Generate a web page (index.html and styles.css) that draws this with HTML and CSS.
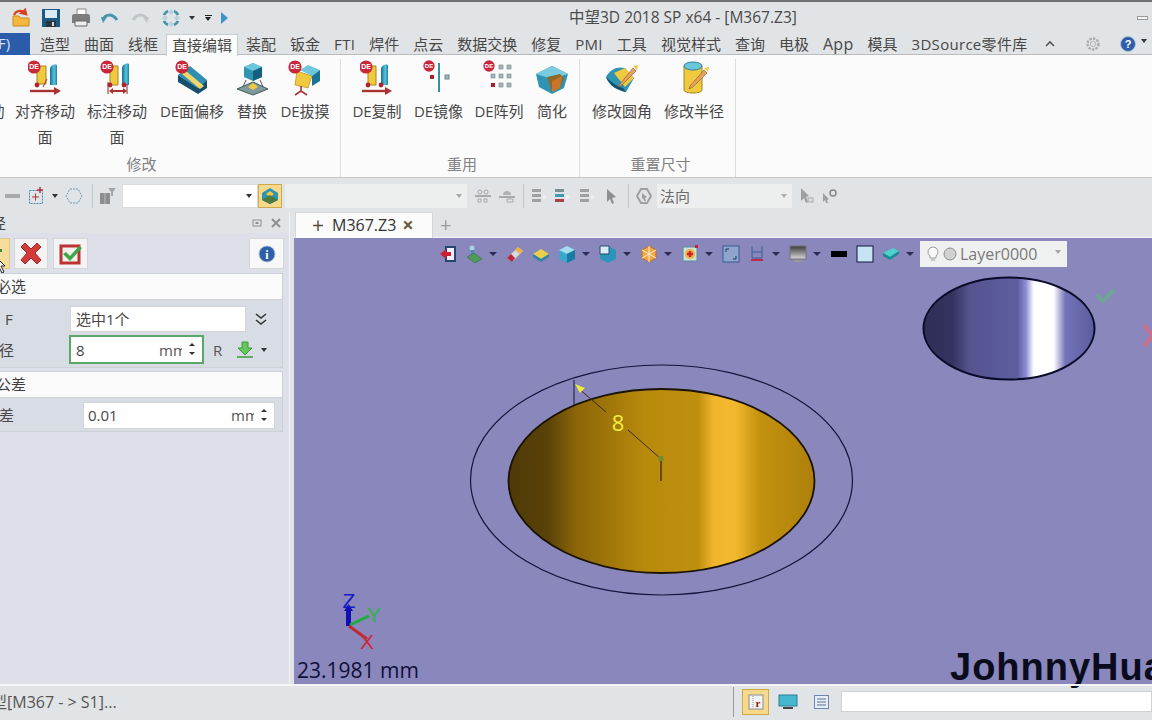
FILE: index.html
```html
<!DOCTYPE html>
<html lang="zh">
<head>
<meta charset="utf-8">
<title>中望3D 2018 SP x64 - [M367.Z3]</title>
<link rel="stylesheet" href="styles.css">
</head>
<body>
<svg class="defs" width="0" height="0">
  <defs>
    <symbol id="de" viewBox="0 0 14 14"><circle cx="7" cy="7" r="6.6" fill="#c8283a"/><text x="7" y="9.4" font-size="7" font-weight="700" fill="#fff" text-anchor="middle" font-family="Liberation Sans">DE</text></symbol>
    <linearGradient id="gold" x1="0" x2="1" y1="0" y2="0">
      <stop offset="0" stop-color="#4e3a08"/><stop offset=".13" stop-color="#5a4208"/><stop offset=".22" stop-color="#8b6508"/><stop offset=".45" stop-color="#b88a0c"/><stop offset=".62" stop-color="#c08f10"/><stop offset=".67" stop-color="#f0b52c"/><stop offset=".74" stop-color="#f2b92e"/><stop offset=".82" stop-color="#c4920f"/><stop offset="1" stop-color="#ad800c"/>
    </linearGradient>
    <linearGradient id="blueish" x1="0" x2="1" y1="0" y2="0">
      <stop offset="0" stop-color="#2f2e58"/><stop offset=".17" stop-color="#34335f"/><stop offset=".27" stop-color="#55548f"/><stop offset=".55" stop-color="#5e5da0"/><stop offset=".6" stop-color="#8e8ed8"/><stop offset=".645" stop-color="#fff"/><stop offset=".76" stop-color="#fff"/><stop offset=".83" stop-color="#7373b8"/><stop offset="1" stop-color="#5c5b9c"/>
    </linearGradient>
    <linearGradient id="cyl" x1="0" x2="1" y1="0" y2="0"><stop offset="0" stop-color="#0f6f92"/><stop offset=".6" stop-color="#5cc4dc"/><stop offset="1" stop-color="#1b7fa4"/></linearGradient>
    <linearGradient id="screen" x1="0" x2="0" y1="0" y2="1"><stop offset="0" stop-color="#3a3a3a"/><stop offset="1" stop-color="#d8d8d8"/></linearGradient>
  </defs>
</svg>

<header class="titlebar">
  <div class="qat">
    <svg class="q20" viewBox="0 0 20 20"><path d="M2 8h6l1 2h9v8H2z" fill="#f5b73c" stroke="#c98a1e"/><path d="M3 7C5 3 9 2 13 4l-2 1 4 1-1-4-1 1" fill="none" stroke="#d8401f" stroke-width="2.4"/></svg>
    <svg class="q20" viewBox="0 0 20 20"><path d="M1 1h18v18H1z" fill="#1d5a80"/><path d="M4 2h12v8H4z" fill="#dcecf5"/><path d="M5 13h10v6H5z" fill="#2c3440"/><path d="M11 14h2v4h-2z" fill="#cfd8df"/></svg>
    <svg class="q20" viewBox="0 0 20 20"><path d="M6 1h9v6H6z" fill="#fff" stroke="#888"/><path d="M1 8c0-1 1-2 2-2h14c1 0 2 1 2 2v7H1z" fill="#7d7d7d"/><path d="M4 13h12v5H4z" fill="#eee" stroke="#666"/></svg>
    <svg class="q18" viewBox="0 0 18 18"><path d="M2 11C4 5 11 4 16 11" fill="none" stroke="#4a95ad" stroke-width="3"/><path d="M0 8l6 0-4 6z" fill="#4a95ad"/></svg>
    <svg class="q18" viewBox="0 0 18 18"><path d="M16 11C14 5 7 4 2 11" fill="none" stroke="#c2c4c4" stroke-width="3"/><path d="M18 8l-6 0 4 6z" fill="#c2c4c4"/></svg>
    <svg class="q20" viewBox="0 0 20 20"><g fill="none" stroke-width="3"><path d="M3 7A8 8 0 0 1 7 3" stroke="#4a95ad"/><path d="M13 3A8 8 0 0 1 17 7" stroke="#4a95ad"/><path d="M17 13A8 8 0 0 1 13 17" stroke="#4a95ad"/><path d="M7 17A8 8 0 0 1 3 13" stroke="#4a95ad"/></g><path d="M1 10l3-3 3 3-3 3zM13 10l3-3 3 3-3 3zM10 1l3 3-3 3-3-3zM10 13l3 3-3 3-3-3z" fill="#b9d3db"/></svg>
    <i class="caret"></i>
    <span class="menu-caret"></span>
    <svg class="blue-tri" viewBox="0 0 7 12"><path d="M0 0l7 6-7 6z" fill="#3d93c8"/></svg>
  </div>
  <div class="title">中望3D 2018 SP x64 - [M367.Z3]</div>
  <span class="minimize"></span>
</header>

<nav class="tabs">
  <span class="file">F)</span>
  <span>造型</span><span>曲面</span><span>线框</span><span class="active">直接编辑</span><span>装配</span><span>钣金</span><span class="lat">FTI</span><span>焊件</span><span>点云</span><span>数据交换</span><span>修复</span><span class="lat">PMI</span><span>工具</span><span>视觉样式</span><span>查询</span><span>电极</span><span class="lat app">App</span><span>模具</span><span class="lat">3DSource零件库</span>
  <div class="tab-tools">
    <svg class="chev" viewBox="0 0 10 8"><path d="M1 6l4-4 4 4" fill="none" stroke="#555" stroke-width="1.6"/></svg>
    <svg class="gear" viewBox="0 0 16 16"><circle cx="8" cy="8" r="5.5" fill="none" stroke="#a9acae" stroke-width="2.4" stroke-dasharray="2.4 1.2"/><circle cx="8" cy="8" r="2.6" fill="none" stroke="#b5b7b9"/></svg>
    <svg class="help" viewBox="0 0 16 16"><circle cx="8" cy="8" r="7.5" fill="#2f5fa8" stroke="#aac1de"/><text x="8" y="12" font-size="11" font-weight="700" fill="#fff" text-anchor="middle" font-family="Liberation Sans">?</text></svg>
    <i class="caret dark"></i>
  </div>
</nav>

<section class="ribbon">
  <div class="group g1">
    <div class="items">
      <div class="item w69"><div class="ric"></div><div class="lbl">推拉移动面</div></div>
      <div class="item w72">
        <svg class="ric" viewBox="0 0 34 36"><path d="M9 6h9v18H9z" fill="#f1c93e" stroke="#a3851f"/><path d="M22 9c0-4 7-6 7-3v19h-7z" fill="url(#cyl)"/><circle cx="9" cy="25" r="2.4" fill="#b5202e"/><path d="M2 31h25" stroke="#a8332f" stroke-width="2.4"/><path d="M26 27l7 4-7 4z" fill="#a8332f"/><path d="M15 27l4-8" stroke="#a8332f"/><use href="#de" x="-1" y="0" width="14" height="14"/></svg>
        <div class="lbl">对齐移动面</div></div>
      <div class="item w72">
        <svg class="ric" viewBox="0 0 34 36"><path d="M10 6h8v19h-8z" fill="#f1c93e" stroke="#a3851f"/><path d="M22 8c0-4 7-6 7-3v20h-7z" fill="url(#cyl)"/><path d="M8 22v12M27 24v10" stroke="#7c2a2a"/><circle cx="10" cy="25" r="2.4" fill="#b5202e"/><circle cx="24" cy="25" r="2.4" fill="#b5202e"/><path d="M11 31h14" stroke="#a8332f" stroke-width="2"/><path d="M9 31l4-3v6zM27 31l-4-3v6z" fill="#a8332f"/><use href="#de" x="0" y="0" width="14" height="14"/></svg>
        <div class="lbl">标注移动面</div></div>
      <div class="item w78">
        <svg class="ric" viewBox="0 0 34 36"><path d="M3 15L15 6l17 14-9 8z" fill="#2f8fb0"/><path d="M3 15v7l20 12 9-6v-8l-9 8z" fill="#14506e"/><path d="M7 14l18 15 4-3L11 11z" fill="#f1d56a"/><use href="#de" x="0" y="0" width="14" height="14"/></svg>
        <div class="lbl">DE面偏移</div></div>
      <div class="item w42">
        <svg class="ric" viewBox="0 0 34 36"><path d="M9 7l9-4 9 4v10l-9 4-9-4z" fill="#2f93b4"/><path d="M9 7l9 4 9-4-9-4z" fill="#6dc7dc"/><path d="M18 11v10l9-4V7z" fill="#14607f"/><path d="M11 20l-4 9M25 20l4 9" stroke="#555"/><path d="M2 29l16-7 15 7-15 6z" fill="#7e9a9c" stroke="#43565a"/><path d="M13 27l5-4 5 4-5 3z" fill="#f1c93e"/></svg>
        <div class="lbl">替换</div></div>
      <div class="item w64">
        <svg class="ric" viewBox="0 0 34 36"><path d="M12 10l8-5 12 5-8 6z" fill="#6dc7dc"/><path d="M24 16l8-6v11l-8 5z" fill="#1b7296"/><path d="M9 11l15 5-4 12-13-3z" fill="#f1c93e" stroke="#a3851f" stroke-width=".6"/><path d="M13 26v5M13 31l-6 4M13 31l6 4" stroke="#a8332f" stroke-width="1.6"/><use href="#de" x="0" y="0" width="14" height="14"/></svg>
        <div class="lbl">DE拔摸</div></div>
    </div>
    <div class="glabel shifted">修改</div>
  </div>
  <div class="group g2">
    <div class="items">
      <div class="item w64">
        <svg class="ric" viewBox="0 0 34 36"><path d="M8 6h8v19H8z" fill="#f1c93e" stroke="#a3851f"/><path d="M21 9c0-4 7-6 7-3v19h-7z" fill="url(#cyl)"/><circle cx="8" cy="25" r="2.4" fill="#b5202e"/><circle cx="21" cy="25" r="2.4" fill="#b5202e"/><path d="M2 31h24" stroke="#a8332f" stroke-width="2.4"/><path d="M25 27l7 4-7 4z" fill="#a8332f"/><use href="#de" x="-1" y="0" width="14" height="14"/></svg>
        <div class="lbl">DE复制</div></div>
      <div class="item w59">
        <svg class="ric" viewBox="0 0 34 36"><path d="M17 3v29" stroke="#3a8fa8" stroke-width="2"/><rect x="8" y="15" width="4" height="4" fill="#a8202e"/><rect x="23" y="15" width="4" height="4" fill="#a7b7bb" stroke="#6f8489"/><use href="#de" x="1" y="0" width="12" height="12"/></svg>
        <div class="lbl">DE镜像</div></div>
      <div class="item w62">
        <svg class="ric" viewBox="0 0 34 36"><g fill="#a7b7bb" stroke="#6f8489" stroke-width=".6"><rect x="17" y="5" width="4" height="4"/><rect x="25" y="5" width="4" height="4"/><rect x="9" y="14" width="4" height="4"/><rect x="17" y="14" width="4" height="4"/><rect x="25" y="14" width="4" height="4"/><rect x="17" y="23" width="4" height="4"/><rect x="25" y="23" width="4" height="4"/></g><rect x="9" y="23" width="4" height="4" fill="#a8202e"/><use href="#de" x="1" y="0" width="12" height="12"/></svg>
        <div class="lbl">DE阵列</div></div>
      <div class="item w44">
        <svg class="ric" viewBox="0 0 34 36"><path d="M1 14l16-8 16 8-4 14-12 6-13-7z" fill="#2f93b4"/><path d="M1 14l16-8 16 8-16 5z" fill="#79ccdf"/><path d="M12 17l13-3 4 4-4 10-8 4z" fill="#8b6a2d"/><path d="M17 21l10-5-2 12-8 4z" fill="#c9762a"/></svg>
        <div class="lbl">简化</div></div>
    </div>
    <div class="glabel">重用</div>
  </div>
  <div class="group g3">
    <div class="items">
      <div class="item w72">
        <svg class="ric" viewBox="0 0 34 36"><path d="M1 17C5 9 13 6 20 8l9 10-8 14C12 30 4 26 1 17z" fill="#2f93b4"/><path d="M1 17c4 9 11 13 20 15l-3-4C11 26 6 22 1 17z" fill="#14506e"/><path d="M9 13l11-5 9 10-9 9z" fill="#f1c93e"/><path d="M15 24L28 8l3 3-14 14-4 2z" fill="#e8a15c" stroke="#7d5a2e" stroke-width=".6"/><path d="M28 6l4 4 1-5z" fill="#f1c93e"/></svg>
        <div class="lbl">修改圆角</div></div>
      <div class="item w72">
        <svg class="ric" viewBox="0 0 34 36"><path d="M7 6h18v24c0 4-18 4-18 0z" fill="#f1c93e" stroke="#a3851f"/><ellipse cx="16" cy="6" rx="9" ry="4" fill="#6dc7dc" stroke="#2f7e97"/><path d="M13 26L27 10l3 3-14 14-4 2z" fill="#e8a15c" stroke="#7d5a2e" stroke-width=".6"/><path d="M27 8l4 4 1-5z" fill="#f1c93e"/></svg>
        <div class="lbl">修改半径</div></div>
    </div>
    <div class="glabel">重置尺寸</div>
  </div>
</section>

<section class="toolbar">
  <span class="dash"></span>
  <svg class="t18" viewBox="0 0 18 18"><rect x="1.5" y="3.5" width="13" height="13" fill="none" stroke="#4b89a8" stroke-dasharray="2 1"/><path d="M4 10h7M7.5 6.5v7" stroke="#b03040"/><path d="M12 0v6M9 3h6" stroke="#b03040" stroke-width="1.5"/></svg>
  <i class="caret tb"></i>
  <svg class="t18 hex" viewBox="0 0 18 18"><path d="M5 2h8l4 7-4 7H5L1 9z" fill="none" stroke="#6a9db3" stroke-dasharray="2 1"/></svg>
  <span class="sep"></span>
  <svg class="t18 filt" viewBox="0 0 18 18"><path d="M1 6h10v11H1z" fill="#8c8f90"/><path d="M6 6v11" stroke="#bbb"/><path d="M9 1h8l-3 4v4h-2V5z" fill="#a5a8a9"/></svg>
  <div class="combo white"><i class="caret"></i></div>
  <div class="yellow-btn">
    <svg width="18" height="18" viewBox="0 0 18 18"><path d="M1 6l8-5 8 5v7l-8 4-8-4z" fill="#2f93b4"/><path d="M5 7l4-3 4 3-4 3z" fill="#f1c93e"/><path d="M1 13l8-5 8 5-8 4z" fill="#4c7a3d"/></svg>
  </div>
  <div class="combo grey w182"><i class="caret pale"></i></div>
  <svg class="t16 ml8" viewBox="0 0 16 16"><g fill="none" stroke="#a7a9aa"><circle cx="5" cy="4" r="2"/><circle cx="11" cy="4" r="2"/><path d="M0 8h16" stroke-width="2"/><path d="M3 11h3v3H3zM9 11h3v3H9z"/></g></svg>
  <svg class="t16 ml8" viewBox="0 0 16 16"><path d="M4 7a4 4 0 0 1 8 0z" fill="#b0b2b3"/><path d="M0 9h16" stroke="#a7a9aa" stroke-width="2"/><path d="M8 11h6v3H8z" fill="none" stroke="#a7a9aa"/></svg>
  <span class="sep s2"></span>
  <svg class="t16 ml7" viewBox="0 0 16 16"><path d="M1 1h9v3H1zM1 6h9v3H1zM1 11h9v3H1z" fill="#9ea1a2"/><path d="M12 6l4 3-4 3z" fill="#eee"/></svg>
  <svg class="t16 ml7" viewBox="0 0 16 16"><path d="M1 1h9v3H1z" fill="#7e8f94"/><path d="M1 6h9v3H1z" fill="#3d9ab5"/><path d="M1 11h9v3H1z" fill="#a8404c"/><path d="M12 6l4 3-4 3z" fill="#eee"/></svg>
  <svg class="t16 ml9" viewBox="0 0 16 16"><path d="M1 1h9v3H1zM1 6h9v3H1zM1 11h9v3H1z" fill="#9ea1a2"/><path d="M12 6l4 3-4 3z" fill="#eee"/></svg>
  <svg class="t16 ml9" viewBox="0 0 16 16"><path d="M3 1l9 8-4 1 2 5-2 1-2-5-3 3z" fill="#8d9092"/></svg>
  <span class="sep s3"></span>
  <svg class="t16 ml7" viewBox="0 0 16 16"><path d="M5 1h6l4 7-4 7H5L1 8z" fill="none" stroke="#9ea1a2" stroke-width="2"/><path d="M6 5l5 4-2 1 1 3-2 0-1-3-1 1z" fill="#9ea1a2"/></svg>
  <div class="combo grey w135">法向<i class="caret pale"></i></div>
  <svg class="t16 ml7" viewBox="0 0 16 16"><path d="M2 0l8 8-3 1 2 5-2 1-2-5-3 3z" fill="#9ea1a2"/><rect x="9" y="10" width="5" height="4" fill="#ddd" stroke="#aaa"/></svg>
  <svg class="t16 ml7" viewBox="0 0 16 16"><path d="M1 5l6 6-2 1 1 3-2 0-1-3-2 2z" fill="#9ea1a2"/><circle cx="11" cy="5" r="3" fill="none" stroke="#888" stroke-width="1.5"/></svg>
</section>

<main class="main">
  <aside class="panel">
    <div class="panel-title">
      <span class="ptext">径</span>
      <svg class="pi" viewBox="0 0 10 10"><rect x="1" y="2" width="8" height="6" fill="none" stroke="#8d9092"/><rect x="3.5" y="4" width="3" height="2" fill="#8d9092"/></svg>
      <svg class="pi px" viewBox="0 0 12 10"><path d="M2 1l8 8M10 1L2 9" stroke="#8d9092" stroke-width="2"/></svg>
    </div>
    <div class="pbtns">
      <div class="pbtn ok"></div>
      <div class="pbtn red">
        <svg width="26" height="24" viewBox="0 0 26 24"><path d="M3 5l4-4 6 6 6-6 4 4-6 6 6 7-4 4-6-6-6 6-4-4 6-7z" fill="#d33a3a" stroke="#a12a2a"/></svg>
      </div>
      <div class="pbtn apply">
        <svg width="24" height="22" viewBox="0 0 24 22"><path d="M2 3h18v17H2z" fill="#f3f0ec" stroke="#b33" stroke-width="3"/><path d="M7 9l4 4 9-10 3 2-12 13-7-7z" fill="#3fa64a"/></svg>
      </div>
      <div class="pbtn info">
        <svg width="18" height="18" viewBox="0 0 18 18"><circle cx="9" cy="9" r="8" fill="#2f5fa8" stroke="#a4bcdc"/><text x="9" y="14" font-size="12" font-weight="700" fill="#fff" text-anchor="middle" font-family="Liberation Serif">i</text></svg>
      </div>
    </div>
    <div class="sec-head">必选</div>
    <div class="sec-body b1">
      <div class="row r1">
        <span class="rlabel">F</span>
        <div class="field f1">选中1个</div>
        <svg class="dbl" viewBox="0 0 14 14"><path d="M2 2l5 4 5-4M2 8l5 4 5-4" fill="none" stroke="#333" stroke-width="1.6"/></svg>
      </div>
      <div class="row r2">
        <span class="rlabel clip">径</span>
        <div class="field f2">8<span class="unit">mm</span><span class="spin"><i></i><i></i></span></div>
        <span class="rr">R</span>
        <svg class="garrow" viewBox="0 0 18 18"><path d="M6 1h6v6h4l-7 7-7-7h4z" fill="#68c45c" stroke="#3d9a3d"/><path d="M1 16h16" stroke="#3d9a3d" stroke-width="1.5"/></svg>
        <i class="caret"></i>
      </div>
    </div>
    <div class="sec-head second">公差</div>
    <div class="sec-body b2">
      <div class="row r3">
        <span class="rlabel clip">差</span>
        <div class="field f3">0.01<span class="unit">mm</span><span class="spin"><i></i><i></i></span></div>
      </div>
    </div>
    <svg class="cursor" viewBox="0 0 12 16"><path d="M1 0l9 9H6l3 6-2 1-3-6-3 3z" fill="#fff" stroke="#222"/></svg>
  </aside>

  <div class="work">
    <div class="doc-tabs">
      <div class="doc-tab"><span class="plus">+</span>M367.Z3<span class="close">×</span></div>
      <span class="newtab">+</span>
    </div>
    <div class="viewport">
      <svg class="scene" viewBox="294 238 858 446">
        <ellipse cx="661.5" cy="480" rx="191" ry="115" fill="none" stroke="#14143c" stroke-width="1.2"/>
        <ellipse cx="661.5" cy="481" rx="153" ry="92" fill="url(#gold)" stroke="#1a1204" stroke-width="1.8"/>
        <ellipse cx="1009" cy="328.5" rx="85.5" ry="51" fill="url(#blueish)" stroke="#0a0a2a" stroke-width="2"/>
        <path d="M574 380v25" stroke="#14143c"/>
        <path d="M578 388L606 412M628 430L660 458" stroke="#3a2a20"/>
        <path d="M575 384l10 4-5 5z" fill="#ecec3a"/>
        <path d="M661 459v22" stroke="#2a2210" stroke-width="1.2"/>
        <rect x="658.5" y="456" width="5" height="5" fill="#7a8a2a"/>
        <text x="618" y="431" class="dim">8</text>
        <path d="M1097 295l6 6 11-11" fill="none" stroke="#6fa596" stroke-width="4"/>
        <path d="M1144 325l8 10M1144 346l8-10" stroke="#c8708c" stroke-width="4"/>
        <path d="M348.5 626v-18" stroke="#1010b0" stroke-width="5"/>
        <g fill="none" stroke-width="3"><path d="M350 625l19-9" stroke="#1cae3c"/><path d="M349 626l18 13" stroke="#c02a38"/></g>
        <path d="M344 611l4.500-7 4.500 7z" fill="#1010b0"/>
        <text x="349" y="608" class="ax z">Z</text>
        <text x="374" y="622" class="ax y">Y</text>
        <text x="367" y="649" class="ax x">X</text>
      </svg>
      <div class="vtools">
        <svg viewBox="0 0 18 18"><path d="M7 2h9v14H7z" fill="#eef" stroke="#23476e" stroke-width="2"/><path d="M1 9l6-5v3h5v4H7v3z" fill="#d01e32"/></svg>
        <svg viewBox="0 0 18 18"><circle cx="7" cy="3" r="2.5" fill="#a5d5e4"/><path d="M6 5h3v7H6z" fill="#3d93b0"/><path d="M2 12l7-4 8 6-7 4z" fill="#4e9a5d" stroke="#356d40" stroke-width=".6"/></svg>
        <i class="dd"></i>
        <svg viewBox="0 0 18 18"><path d="M1 13L12 2l5 4L6 17z" fill="#d8d8d8" stroke="#999" stroke-width=".5"/><path d="M1 13l4-4 4 4-3 4z" fill="#b72a3c"/><path d="M12 2l5 4-3 3-5-4z" fill="#e9b24b"/></svg>
        <svg viewBox="0 0 18 18"><path d="M1 9l8-5 8 5-8 5z" fill="#e9cf48"/><path d="M1 9v3l8 5 8-5V9l-8 5z" fill="#2b85a5"/></svg>
        <svg viewBox="0 0 18 18"><path d="M1 5l8-4 8 4v9l-8 4-8-4z" fill="#3aa8cc"/><path d="M1 5l8 4 8-4-8-4z" fill="#a6dded"/><path d="M9 9v9l8-4V5z" fill="#1b7aa0"/></svg>
        <i class="dd"></i>
        <svg viewBox="0 0 18 18"><path d="M1 5l8-4 8 4v9l-8 4-8-4z" fill="#2b94bc"/><path d="M1 1h9v8H1z" fill="#dcecf5" stroke="#234f70"/></svg>
        <i class="dd"></i>
        <svg viewBox="0 0 18 18"><path d="M9 1l7 4v8l-7 4-7-4V5z" fill="#f0a64a" stroke="#c06f1d"/><path d="M2 5l14 8M16 5L2 13M9 1v16" stroke="#fff1c8"/></svg>
        <i class="dd"></i>
        <svg viewBox="0 0 18 18"><rect x="2" y="2" width="14" height="14" fill="#cfe0d8" stroke="#5b8e9e"/><circle cx="9" cy="9" r="5" fill="#eeb23e"/><path d="M6 9h6M9 6v6" stroke="#d01e32" stroke-width="2.400"/><rect x="14" y="0" width="3" height="3" fill="#d01e32"/></svg>
        <i class="dd"></i>
        <svg viewBox="0 0 18 18"><rect x="1" y="1" width="16" height="16" fill="#8fa6cc" stroke="#3b5a94"/><path d="M4 7V4h3M14 11v3h-3" stroke="#23345f" fill="none"/></svg>
        <svg viewBox="0 0 18 18"><path d="M4 1v12h10V1M4 7h10" fill="none" stroke="#3b5a94"/><path d="M3 15h12" stroke="#c02a4a" stroke-width="2"/></svg>
        <i class="dd"></i>
        <svg viewBox="0 0 18 18"><rect x="1" y="1" width="16" height="13" fill="url(#screen)" stroke="#777"/><path d="M5 15h8v2H5z" fill="#999"/></svg>
        <i class="dd"></i>
        <svg viewBox="0 0 18 18"><rect x="1" y="6" width="16" height="6" fill="#000"/></svg>
        <svg viewBox="0 0 18 18"><rect x="1" y="1" width="16" height="16" fill="#c5e3f3" stroke="#14143c"/></svg>
        <svg viewBox="0 0 18 18"><path d="M1 8l10-5 6 3-9 6z" fill="#4fd0cd"/><path d="M1 8v3l7 4 9-6V6l-9 6z" fill="#178a96"/></svg>
        <i class="dd"></i>
        <div class="layer">
          <svg class="bulb" viewBox="0 0 12 16"><path d="M6 1a5 5 0 0 0-3 9v2h6v-2a5 5 0 0 0-3-9z" fill="#fafafa" stroke="#9a9a9a"/><path d="M4 14h4" stroke="#9a9a9a"/></svg>
          <svg class="disc" viewBox="0 0 14 14"><circle cx="7" cy="7" r="6" fill="#d0d0d0" stroke="#8e8e8e"/></svg>
          <span>Layer0000</span>
          <i class="caret pale"></i>
        </div>
      </div>
      <div class="scale">23.1981 mm</div>
      <div class="brand">JohnnyHua</div>
    </div>
  </div>
</main>

<footer class="status">
  <span class="msg">型[M367 - &gt; S1]...</span>
  <div class="stat-right">
    <span class="sep st"></span>
    <div class="sbtn">
      <svg width="16" height="16" viewBox="0 0 16 16"><rect x="1" y="1" width="14" height="14" fill="#f4f4f4" stroke="#8a8f96"/><path d="M5 2v12" stroke="#8a8f96" stroke-dasharray="1 1"/><text x="10" y="13" font-size="11" font-weight="700" fill="#8a2020" text-anchor="middle" font-family="Liberation Serif">r</text></svg>
    </div>
    <svg class="mon" viewBox="0 0 20 16"><rect x="1" y="1" width="18" height="11" fill="#45b7cf" stroke="#2a7f93"/><path d="M5 13h10v2H5z" fill="#444"/></svg>
    <svg class="docic" viewBox="0 0 15 14"><rect x=".5" y=".5" width="14" height="13" fill="#e8eef7" stroke="#6d87ae"/><path d="M3 4h9M3 7h9M3 10h9" stroke="#59708f"/></svg>
    <div class="sinput"></div>
  </div>
</footer>
</body>
</html>
```
FILE: styles.css
```css
* { box-sizing: border-box; }
html, body { margin: 0; padding: 0; }
body {
  width: 1152px; height: 720px; overflow: hidden;
  display: flex; flex-direction: column;
  background: #e1e4e6; color: #474747;
  font: 15px/20px "Open Sans", "Noto Sans CJK SC", sans-serif;
  border-top: 2px solid #6f7173;
}
i { display: block; font-style: normal; }
.defs { position: absolute; }
.caret { width: 0; height: 0; border: 3px solid transparent; border-top: 4px solid #333; border-bottom: 0; }
.caret.pale { border-top-color: #a8a8a8; }

.titlebar { height: 31px; flex: none; display: flex; align-items: center; position: relative; }
.qat { display: flex; align-items: center; padding-left: 11px; }
.q20 { width: 20px; height: 20px; margin-right: 10px; }
.q18 { width: 18px; height: 18px; margin-right: 12px; }
.qat .caret { margin-left: -2px; }
.menu-caret { width: 7px; height: 5px; margin-left: 10px; border-top: 1px solid #222; position: relative; }
.menu-caret::after { content: ""; position: absolute; left: 0; top: 1px; border: 3.5px solid transparent; border-top: 4px solid #222; border-bottom: 0; }
.blue-tri { width: 7px; height: 12px; margin-left: 9px; }
.title { position: absolute; left: 569px; top: 5px; font-size: 15.5px; white-space: nowrap; color: #4a4a4a; }
.minimize { position: absolute; left: 1137px; top: 14px; width: 11px; height: 4px; border: 1px solid #999; background: #f4f4f4; }

.tabs { height: 22px; flex: none; display: flex; align-items: center; gap: 14px; white-space: nowrap; border-bottom: 1px solid #b9bcbe; position: relative; }
.tabs > span { line-height: 20px; }
.tabs .lat { letter-spacing: .3px; }
.tabs .app { font-size: 16px; }
.file { width: 30px; height: 22px; margin-top: 1px; margin-right: -4px; background: #2a5caa; color: #cfe0f7; text-indent: -2px; }
.tabs .active { background: #fbfbfb; border: 1px solid #c9cccd; border-bottom: 0; margin: 0 -6px; padding: 0 5px; height: 22px; position: relative; top: 1px; }
.tab-tools { display: flex; align-items: center; position: absolute; left: 1045px; top: 3px; }
.chev { width: 10px; height: 8px; }
.gear { width: 16px; height: 16px; margin-left: 30px; }
.help { width: 16px; height: 16px; margin-left: 19px; }
.caret.dark { margin-left: 5px; margin-top: -6px; }

.ribbon { height: 123px; flex: none; display: flex; background: #fbfbfb; border-bottom: 1px solid #c4c6c8; }
.group { display: flex; flex-direction: column; border-right: 1px solid #dcdddd; margin-top: 4px; }
.g1 { margin-left: -60px; width: 401px; padding-right: 3px; }
.g2 { width: 239px; padding-left: 4px; }
.g3 { width: 156px; padding-left: 6px; }
.items { display: flex; flex: 1; }
.item { display: flex; flex-direction: column; align-items: center; padding-top: 1px; }
.ric { width: 34px; height: 36px; flex: none; }
.lbl { margin-top: 2px; width: 60px; line-height: 26px; text-align: center; white-space: normal; flex: none; }
.w42 .lbl, .w44 .lbl { width: 42px; }
.w78 .lbl, .w64 .lbl, .w62 .lbl, .w59 .lbl { width: 76px; white-space: nowrap; }
.w42 { width: 42px; } .w44 { width: 44px; } .w59 { width: 59px; } .w62 { width: 62px; }
.w64 { width: 64px; } .w69 { width: 69px; } .w72 { width: 72px; } .w78 { width: 78px; }
.glabel { height: 26px; line-height: 26px; text-align: center; color: #818181; flex: none; }
.shifted { padding-left: 6px; }

.toolbar { height: 32px; flex: none; display: flex; align-items: center; margin-top: 2px; }
.dash { width: 15px; height: 4px; margin-left: 5px; background: #a7a9aa; }
.t18 { width: 18px; height: 18px; margin-left: 8px; flex: none; }
.t16 { width: 16px; height: 16px; flex: none; }
.caret.tb { margin-left: 6px; }
.hex { margin-left: 7px; }
.sep { width: 1px; height: 24px; background: #c2c5c6; margin-left: 9px; flex: none; }
.filt { margin-left: 6px; }
.combo { height: 24px; display: flex; align-items: center; justify-content: space-between; padding: 0 5px; flex: none; color: #6c6c6c; }
.combo.white { width: 136px; margin-left: 5px; background: #fff; border: 1px solid #d8dadb; justify-content: flex-end; }
.yellow-btn { width: 24px; height: 24px; background: #f6d98a; border: 1px solid #d1a94d; display: flex; align-items: center; justify-content: center; flex: none; }
.combo.grey { background: #edeeee; margin-left: 3px; }
.w182 { width: 182px; justify-content: flex-end; }
.combo.grey.w135 { width: 135px; margin-left: 5px; padding-left: 3px; }
.ml7 { margin-left: 7px; } .ml8 { margin-left: 8px; } .ml9 { margin-left: 9px; }
.s2 { margin-left: 8px; } .s3 { margin-left: 8px; }

.main { flex: 1; min-height: 0; display: flex; }
.panel { width: 290px; flex: none; background: #dde0e8; border-right: 1px solid #f4f4f4; position: relative; overflow: hidden; display: flex; flex-direction: column; padding-right: 5px; }
.panel-title { height: 21px; margin-right: -5px; flex: none; background: #e1e4e6; display: flex; align-items: center; padding-right: 7px; }
.ptext { margin-left: -9px; margin-right: auto; }
.pi { width: 10px; height: 10px; }
.px { width: 12px; margin-left: 8px; }
.pbtns { height: 40px; flex: none; display: flex; align-items: center; padding-top: 1px; }
.pbtn { height: 31px; background: #f3f3f3; border: 1px solid #d4d5d7; display: flex; align-items: center; justify-content: center; flex: none; }
.pbtn.ok { width: 11px; margin-left: -1px; background: #f6dc9a; border-color: #e0c98c; position: relative; }
.pbtn.ok::after { content: ""; position: absolute; left: -1px; top: 10px; width: 3px; height: 3px; background: #3d8a3d; }
.pbtn.red { width: 34px; margin-left: 4px; }
.pbtn.apply { width: 35px; margin-left: 5px; }
.pbtn.info { width: 35px; margin-left: auto; background: #f8f8f8; }
.sec-head { height: 27px; flex: none; margin-right: 1px; background: #fafafa; border: 1px solid #cdd0d4; border-left: 0; line-height: 25px; text-indent: -4px; color: #3f3f3f; }
.sec-head.second { margin-top: 3px; }
.sec-body { margin-right: 1px; background: #d8dce5; border-right: 1px solid #cdd0d4; border-bottom: 1px solid #cdd0d4; flex: none; }
.b1 { height: 68px; }
.b2 { height: 34px; }
.row { display: flex; align-items: center; position: relative; }
.r1 { height: 32px; padding-top: 6px; }
.r2 { height: 32px; padding-top: 3px; }
.r3 { height: 34px; }
.rlabel { width: 70px; padding-left: 5px; flex: none; }
.rlabel.clip { padding-left: 0; margin-left: -1px; width: 70px; }
.r3 .rlabel.clip { width: 84px; }
.field { background: #fff; height: 26px; border: 1px solid #d3d5d8; display: flex; align-items: center; padding-left: 5px; flex: none; position: relative; }
.f1 { width: 176px; }
.f2 { width: 135px; height: 29px; border: 2px solid #5aa768; }
.f3 { width: 192px; height: 27px; padding-left: 4px; }
.unit { position: absolute; right: 20px; width: 23px; overflow: hidden; color: #555; }
.spin { position: absolute; right: 7px; top: 6px; display: flex; flex-direction: column; gap: 6px; }
.spin i { width: 0; height: 0; border: 3px solid transparent; border-bottom: 3px solid #333; border-top: 0; }
.spin i + i { border-top: 3px solid #333; border-bottom: 0; }
.dbl { width: 14px; height: 14px; margin-left: 8px; }
.rr { margin-left: 9px; width: 18px; color: #555; }
.garrow { width: 18px; height: 18px; margin-left: 5px; }
.row .caret { margin-left: 7px; }
.cursor { position: absolute; left: -5px; top: 45px; width: 12px; height: 16px; }

.work { flex: 1; min-width: 0; display: flex; flex-direction: column; margin-left: 4px; }
.doc-tabs { height: 26px; flex: none; display: flex; align-items: center; border-bottom: 1px solid #f4f4f4; }
.doc-tab { width: 138px; height: 26px; margin-left: 1px; background: #fbfbfb; border: 1px solid #d4d6d7; border-bottom: 0; display: flex; align-items: center; color: #333; padding-left: 16px; white-space: nowrap; font-size: 16px; }
.plus { font-size: 21px; margin-right: 8px; color: #5a4a3a; }
.close { font-size: 20px; margin-left: 6px; color: #6b5a3a; font-weight: 700; }
.newtab { margin-left: 7px; font-size: 20px; color: #9a9c9d; }
.viewport { flex: 1; min-height: 0; background: #8987bb; position: relative; }
.scene { position: absolute; left: 0; top: 0; width: 858px; height: 446px; }
.dim { font: 22px "Open Sans", sans-serif; fill: #f2ee40; text-anchor: middle; }
.ax { font: 21px "Liberation Sans", sans-serif; text-anchor: middle; }
.z { fill: #1818c8; } .y { fill: #2fb34a; } .x { fill: #d0283a; }
.vtools { position: absolute; left: 145px; top: 3px; display: flex; align-items: center; height: 26px; }
.vtools > svg { width: 18px; height: 18px; margin-left: 8px; flex: none; }
.vtools > svg:first-child { margin-left: 0; }
.dd { width: 0; height: 0; margin-left: 6px; border: 4px solid transparent; border-top: 4px solid #2b2b55; border-bottom: 0; flex: none; }
.vtools .dd + svg { margin-left: 9px; }
.layer { width: 147px; height: 26px; margin-left: 6px; background: #eff0f0; display: flex; align-items: center; padding-left: 7px; color: #7a7a7a; flex: none; position: relative; font-size: 16px; }
.bulb { width: 12px; height: 16px; }
.disc { width: 14px; height: 14px; margin-left: 4px; margin-right: 3px; }
.layer .caret { position: absolute; right: 6px; top: 9px; }
.scale { position: absolute; left: 3px; bottom: 1px; font-size: 21px; line-height: 26px; color: #10103a; white-space: nowrap; }
.brand { position: absolute; left: 656px; bottom: -3px; font: 700 38px/40px "Liberation Sans", sans-serif; color: #0b0b1e; white-space: nowrap; letter-spacing: 1px; }

.status { height: 36px; flex: none; display: flex; align-items: center; border-top: 2px solid #f4f4f4; position: relative; padding-bottom: 3px; }
.msg { margin-left: -9px; color: #555; white-space: nowrap; font-size: 16px; }
.stat-right { margin-left: auto; display: flex; align-items: center; }
.sep.st { height: 30px; margin: 0; background: #9a9c9d; }
.sbtn { width: 27px; height: 26px; margin-left: 8px; background: #f6d98a; border: 1px solid #d1a94d; display: flex; align-items: center; justify-content: center; }
.mon { width: 20px; height: 16px; margin-left: 9px; }
.docic { width: 15px; height: 14px; margin-left: 16px; }
.sinput { width: 311px; height: 21px; margin-left: 12px; background: #fff; border: 1px solid #cfd2d4; }
```
